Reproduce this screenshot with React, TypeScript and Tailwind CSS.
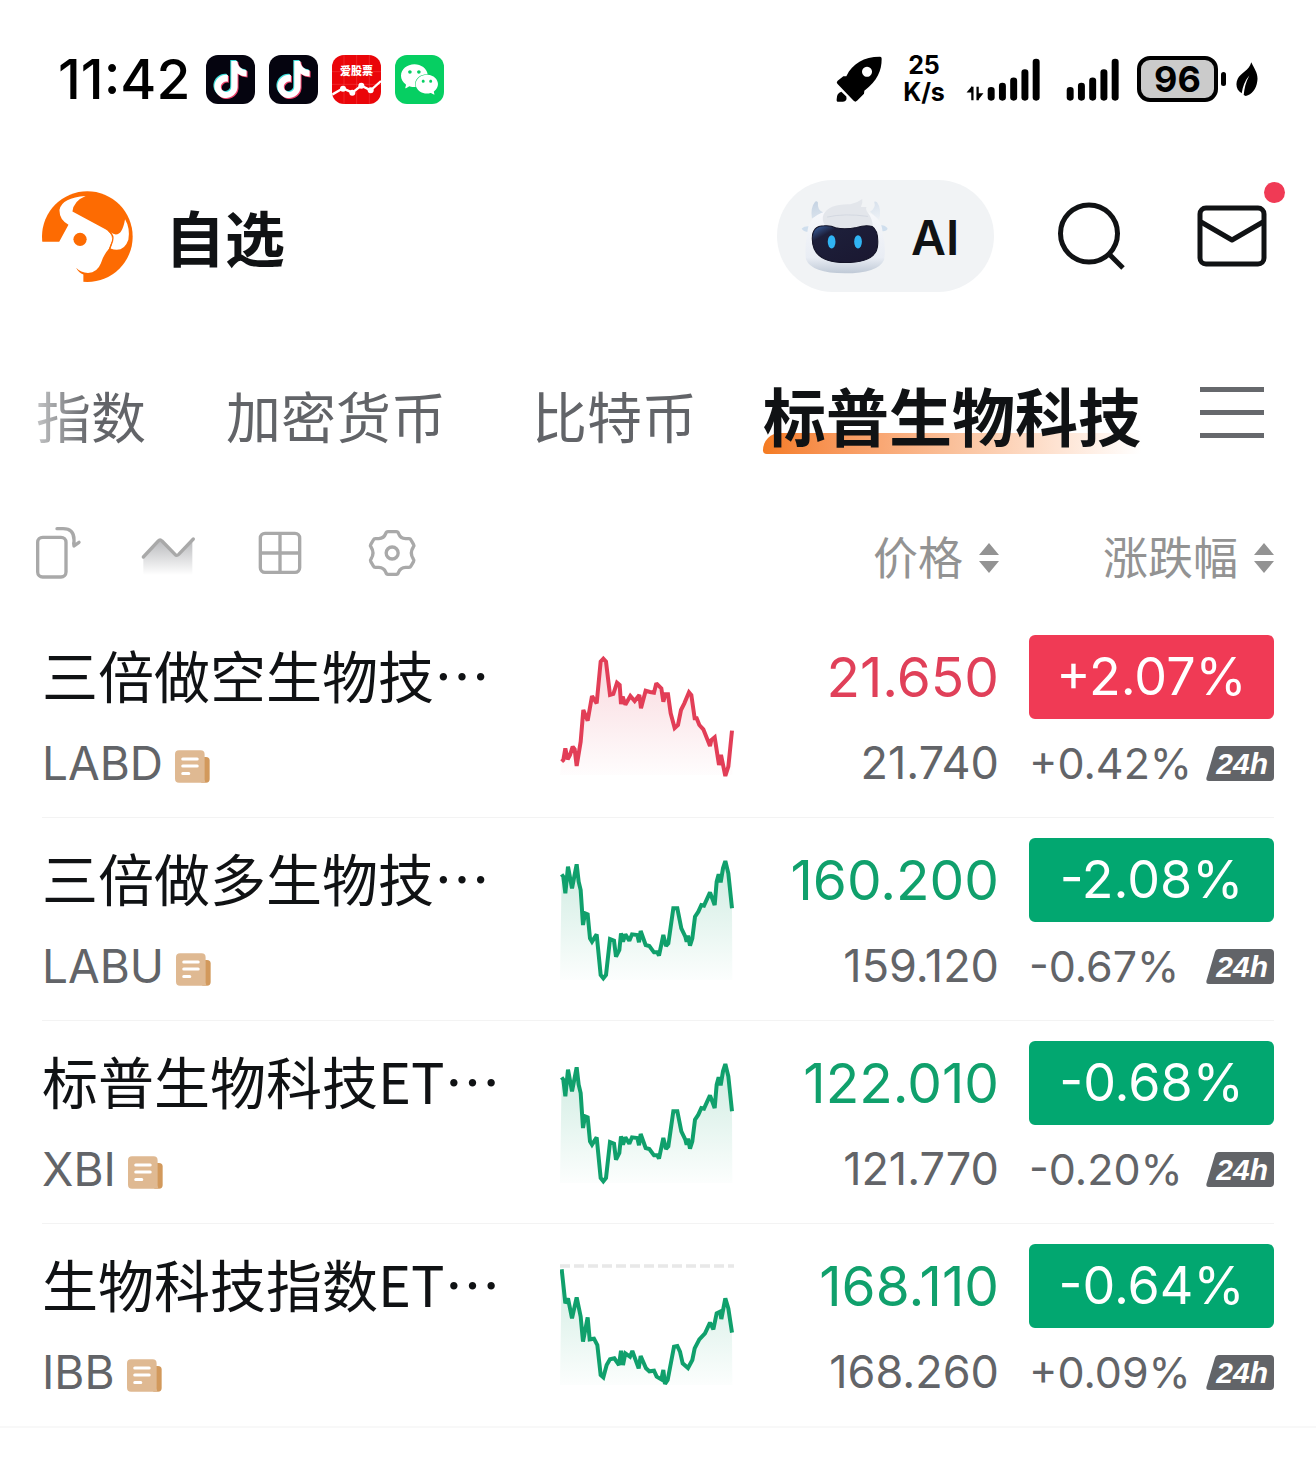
import React from "react";
import { SiTiktok, SiWechat } from "react-icons/si";

type Quote = {
  name: string;
  ticker: string;
  price: string;
  change: string;
  extPrice: string;
  extChange: string;
  up: boolean;
  points: string;
  top: number;
  baseline?: boolean;
};

const DIP =
  "35,88 40,95 46,145 54,65 66,130 80,58 86,110 92,135 99,240 105,205 113,208 120,280 126,290 140,268 152,390 160,400 168,390 180,282 192,287 198,335 208,315 213,265 219,290 226,268 238,287 246,268 262,270 267,292 272,258 287,300 298,303 312,322 322,322 327,332 340,270 348,303 355,295 370,190 382,190 394,250 406,275 410,290 414,272 420,302 427,280 435,215 445,200 454,180 462,182 480,142 494,180 500,110 506,88 512,112 519,70 526,48 535,85 546,190";

const quotes: Quote[] = [
  {
    name: "三倍做空生物技…",
    ticker: "LABD",
    price: "21.650",
    change: "+2.07%",
    extPrice: "21.740",
    extChange: "+0.42%",
    up: true,
    top: 15,
    points:
      "35,365 40,360 46,325 53,358 60,345 68,320 74,328 80,378 92,305 100,210 113,242 126,168 140,190 152,65 160,56 168,65 180,165 190,162 201,128 209,135 213,192 218,170 226,194 241,168 254,183 268,165 273,205 287,152 300,156 312,158 319,130 334,145 340,185 346,163 354,163 362,220 374,264 384,255 393,210 403,190 417,157 424,165 434,235 440,235 448,255 460,268 480,318 484,300 494,292 507,375 513,345 526,408 535,380 546,272",
  },
  {
    name: "三倍做多生物技…",
    ticker: "LABU",
    price: "160.200",
    change: "-2.08%",
    extPrice: "159.120",
    extChange: "-0.67%",
    up: false,
    top: 9,
    points: DIP,
  },
  {
    name: "标普生物科技ET…",
    ticker: "XBI",
    price: "122.010",
    change: "-0.68%",
    extPrice: "121.770",
    extChange: "-0.20%",
    up: false,
    top: 9,
    points: DIP,
  },
  {
    name: "生物科技指数ET…",
    ticker: "IBB",
    price: "168.110",
    change: "-0.64%",
    extPrice: "168.260",
    extChange: "+0.09%",
    up: false,
    top: 12,
    baseline: true,
    points:
      "35,58 46,160 54,145 66,205 80,142 92,200 99,275 113,202 119,268 132,266 142,285 152,375 160,382 170,345 180,328 193,325 207,345 213,302 219,345 226,310 240,320 247,303 266,355 272,318 288,355 298,364 312,362 320,380 334,388 340,360 345,402 353,390 372,290 382,288 390,305 398,340 414,354 427,330 434,295 448,268 465,250 480,218 490,238 500,190 510,185 514,207 526,145 535,175 546,248",
  },
];

function Sparkline({ q }: { q: Quote }) {
  const color = q.up ? "#e23e57" : "#10a06c";
  const id = "fill-" + q.ticker;
  return (
    <svg viewBox={`30 ${q.top} 522 420`} className="block h-[140px] w-[174px]" aria-hidden="true">
      <defs>
        <linearGradient id={id} x1="0" y1="50" x2="0" y2="410" gradientUnits="userSpaceOnUse">
          <stop offset="0" stopColor={color} stopOpacity="0.2" />
          <stop offset="1" stopColor={color} stopOpacity="0.01" />
        </linearGradient>
      </defs>
      {q.baseline && (
        <line x1="30" x2="555" y1="48" y2="48" stroke="#e8e8e8" strokeWidth="10" strokeDasharray="30 12" />
      )}
      <polygon points={`30,405 ${q.points} 547,405`} fill={`url(#${id})`} />
      <polyline points={q.points} fill="none" stroke={color} strokeWidth="12" strokeLinejoin="miter" strokeMiterlimit="2" />
    </svg>
  );
}

function TiktokBadge() {
  return (
    <span className="relative block size-[49px] rounded-[12px] bg-[#05040f]">
      <SiTiktok className="absolute top-[5px] left-[5px] size-[37px] text-[#3fe0dc]" />
      <SiTiktok className="absolute top-[7px] left-[7px] size-[37px] text-[#f0436c]" />
      <SiTiktok className="absolute top-1.5 left-1.5 size-[37px] text-white" />
    </span>
  );
}

function StockBadge() {
  return (
    <span className="relative block size-[49px] overflow-hidden rounded-[12px] bg-[#ea0509]">
      <svg viewBox="0 0 147 147" className="absolute inset-0 size-full" aria-hidden="true">
        <path d="M36 0V147M74 0V147M112 0V147M0 50H147M0 88H147" stroke="#f5494b" strokeWidth="1.5" />
        <polyline points="0,119 33,100 61,113 88,92 116,106 147,78" fill="none" stroke="#fff" strokeWidth="7" />
        <g fill="#fff">
          <circle cx="33" cy="101" r="9" />
          <circle cx="61" cy="113" r="9" />
          <circle cx="88" cy="92" r="9" />
          <circle cx="116" cy="106" r="9" />
        </g>
      </svg>
      <span className="absolute inset-x-0 top-[9px] text-center text-[11px] leading-[14px] font-black text-white">爱股票</span>
    </span>
  );
}

function Signal({ data }: { data?: boolean }) {
  const bars = [
    [751, 140],
    [785, 127],
    [819, 111],
    [853, 86],
    [887, 54],
  ];
  return (
    <span className="flex items-end gap-[3px]">
      {data && (
        <svg viewBox="440 136 52 46" className="h-[15px] w-[18px]" aria-hidden="true">
          <path d="M458 138v42M474 138v42" stroke="#000" strokeWidth="7" fill="none" />
          <path d="M440 156l17-20v20zM475 180l17-22h-17z" />
        </svg>
      )}
      <svg viewBox="740 52 160 130" className="h-[43px] w-[54px]" aria-hidden="true">
        {bars.map(([x, y]) => (
          <rect key={x} x={x - 10.5} y={y} width="21" height={181 - y} rx="10" />
        ))}
      </svg>
    </span>
  );
}

function StatusBar() {
  return (
    <div className="flex h-[158px] items-center justify-between pr-[58px] pl-[58px] text-black">
      <div className="flex items-center">
        <time className="w-[148px] text-[55px] leading-[60px] font-medium">11:42</time>
        <div className="flex items-center gap-3.5">
          <TiktokBadge />
          <TiktokBadge />
          <StockBadge />
          <span className="flex size-[49px] items-center justify-center rounded-[12px] bg-[#06cf62]">
            <SiWechat className="size-[37px] text-white" />
          </span>
        </div>
      </div>
      <div className="flex items-center">
        <svg viewBox="46 46 138 140" className="mr-5 h-[47px] w-[46px]" aria-hidden="true">
          <path
            fillRule="evenodd"
            d="M177 48Q183 47 183 54C183 90 170 120 131 150L130 159L109 180Q104 185 99 180L50 129Q46 124 51 120L68 106H77C96 68 130 48 177 48ZM139 78a15 15 0 1 0 .1 0Z"
          />
          <path d="M62 153l15 14q3 14-10 16h-14q-6 0-5-8 0-18 14-22z" />
        </svg>
        <div className="mr-5 w-[44px] text-center text-[25px] leading-[27px] font-bold">
          <div>25</div>
          <div>K/s</div>
        </div>
        <Signal data />
        <span className="w-[25px]" />
        <Signal />
        <div className="ml-[17px] flex h-[46px] w-[81px] items-center justify-center rounded-[13px] border-4 border-black bg-[#cbcbcb] text-[36px] leading-[38px] font-bold">
          96
        </div>
        <span className="ml-[3px] h-3.5 w-[5px] rounded-full bg-black" />
        <svg viewBox="1246 62 66 106" className="ml-2.5 h-[35px] w-[22px]" aria-hidden="true">
          <path d="M1292 63c10 22 22 34 18 58-3 22-16 40-35 44l-6-3c2-20 6-38 17-59-14 16-20 34-23 54-16-8-20-28-12-44 8-17 34-24 41-50z" />
        </svg>
      </div>
    </div>
  );
}

function BullLogo() {
  return (
    <svg viewBox="65 58 275 275" className="size-[91px]" role="img" aria-label="自选">
      <circle cx="202" cy="196" r="137" fill="#fd6b02" />
      <path
        d="M60 211H117L145 160Q116 144 118 114Q126 78 197 73Q160 88 157 120L258 174Q279 186 277 208L268 232Q250 252 243 276Q232 304 204 306Q182 305 168 290Q176 306 190 310V336H60z"
        fill="#fff"
      />
      <path d="M272 183Q305 206 316 143Q332 170 326 205Q312 246 272 232Q283 208 272 183z" fill="#fff" />
      <path d="M266 178Q284 192 278 210L268 236" fill="none" stroke="#fd6b02" strokeWidth="4" />
      <circle cx="180" cy="204" r="20" fill="#fd6b02" />
    </svg>
  );
}

function Robot() {
  return (
    <svg viewBox="116 98 250 224" preserveAspectRatio="none" className="h-[75px] w-[88px]" aria-hidden="true">
      <defs>
        <linearGradient id="shell" x1="0" y1="0" x2="0" y2="1">
          <stop offset="0" stopColor="#f7f8fb" />
          <stop offset="0.75" stopColor="#e9edf4" />
          <stop offset="1" stopColor="#bfc9d6" />
        </linearGradient>
        <linearGradient id="horn" x1="0" y1="0" x2="1" y2="1">
          <stop offset="0" stopColor="#c4d2e2" />
          <stop offset="1" stopColor="#eef2f7" />
        </linearGradient>
        <linearGradient id="visor" x1="0" y1="0" x2="1" y2="1">
          <stop offset="0" stopColor="#3d6bb0" />
          <stop offset="0.22" stopColor="#1d1f3a" />
          <stop offset="1" stopColor="#1a1730" />
        </linearGradient>
      </defs>
      <path d="M156 106Q142 124 147 156L180 138Q162 134 164 108Q160 102 156 106zM324 106Q330 124 312 136L338 160Q346 128 332 108Q328 104 324 106z" fill="url(#horn)" />
      <path d="M118 186Q126 178 142 180L138 196Q122 196 118 186zM362 186Q356 176 338 176L344 194Q360 196 362 186z" fill="#cfdeed" />
      <path d="M134 200Q136 142 200 132H284Q346 142 348 200Q358 240 352 280Q334 320 241 320Q146 320 130 278Q126 238 134 200z" fill="url(#shell)" />
      <path d="M180 144Q196 112 256 114Q276 110 290 98Q292 112 286 122L302 122Q298 130 308 142Q318 156 320 178Q284 190 240 188Q204 188 184 176Q174 160 180 144z" fill="#e3e6eb" />
      <path d="M190 152Q240 140 306 150" stroke="#cbd2dc" strokeWidth="2" fill="none" />
      <path d="M148 216Q148 178 182 178Q200 176 214 184Q241 190 274 183Q300 174 318 180Q336 192 334 232Q334 288 241 288Q148 288 148 216z" fill="url(#visor)" stroke="#131327" strokeWidth="3" />
      <ellipse cx="203" cy="226" rx="11" ry="20" fill="#30b4f3" />
      <ellipse cx="278" cy="226" rx="11" ry="20" fill="#30b4f3" />
    </svg>
  );
}

function Header() {
  return (
    <header className="flex h-[156px] items-center justify-between pr-[47px] pl-[42px]">
      <div className="flex items-center gap-8">
        <BullLogo />
        <h1 className="pt-2 text-[60px] leading-[72px] font-bold text-[#101214]">自选</h1>
      </div>
      <div className="flex items-center">
        <button type="button" className="flex h-28 w-[217px] items-center rounded-full bg-[#f1f3f5] pl-6 text-[#101214]">
          <Robot />
          <span className="ml-[22px] pt-1 text-[48px] leading-[56px] font-semibold">AI</span>
        </button>
        <button type="button" aria-label="搜索" className="ml-16">
          <svg viewBox="1058 202 68 68" className="block size-[68px]" fill="none" stroke="#101214" strokeWidth="5">
            <circle cx="1089" cy="233.500" r="28.500" />
            <path d="M1108 253l15 15" />
          </svg>
        </button>
        <button type="button" aria-label="消息" className="relative ml-[71px]">
          <svg viewBox="1197 202 72 68" className="block h-[68px] w-[72px]" fill="none" stroke="#101214" strokeWidth="5">
            <rect x="1200" y="208" width="64" height="56" rx="6" />
            <path d="M1201 222l31 18 31-18" strokeLinejoin="round" />
          </svg>
          <span className="absolute -top-5 -right-4 size-[21px] rounded-full bg-[#f03a55]" />
        </button>
      </div>
    </header>
  );
}

function Tabs() {
  return (
    <nav className="flex h-[204px] items-center justify-between pr-[52px] pl-9">
      <div className="flex items-center pt-1 text-[55px] leading-[80px] whitespace-nowrap text-[#626468]">
        <a href="#index" className="mr-20 bg-gradient-to-r from-[#c4c5c6] via-[#626468] to-[#626468] bg-clip-text text-transparent">
          指数
        </a>
        <a href="#crypto" className="mr-[86px]">加密货币</a>
        <a href="#bitcoin" className="mr-[66px]">比特币</a>
        <a href="#biotech" aria-current="page" className="relative text-[63px] font-bold text-[#101214]">
          <span className="absolute inset-x-0 bottom-1 h-[21px] rounded-tl-[18px] rounded-bl-[4px] bg-gradient-to-r from-[#f47b20] via-[#fac09a] to-white" />
          <span className="relative">标普生物科技</span>
        </a>
      </div>
      <button type="button" aria-label="分组" className="flex w-16 flex-col gap-[18px] pb-2">
        <span className="h-[5px] bg-[#66686c]" />
        <span className="h-[5px] bg-[#66686c]" />
        <span className="h-[5px] bg-[#66686c]" />
      </button>
    </nav>
  );
}

function Toolbar() {
  return (
    <div className="-ml-2 flex h-[70px] items-center">
      <button type="button" aria-label="横屏">
        <svg viewBox="42 42 144 168" className="block h-14 w-12" fill="none" stroke="#a9a9a9" strokeWidth="10" strokeLinecap="round" strokeLinejoin="round">
          <rect x="53" y="79" width="85" height="119" rx="15" />
          <path d="M111 53h18q33 0 33 33v19l15-11M162 105l-1-9" />
        </svg>
      </button>
      <button type="button" aria-label="走势图" className="ml-[58px]">
        <svg viewBox="360 42 168 168" className="block size-14" fill="none">
          <defs>
            <linearGradient id="area" x1="0" y1="80" x2="0" y2="192" gradientUnits="userSpaceOnUse">
              <stop offset="0" stopColor="#b4b5b8" />
              <stop offset="1" stopColor="#fff" />
            </linearGradient>
          </defs>
          <path d="M370 138L420 85L470 133L517 86V192H370z" fill="url(#area)" />
          <path d="M370 138L415 90Q420 83 426 90L465 130Q470 136 476 130L520 84" stroke="#a9a9a9" strokeWidth="10" strokeLinecap="round" />
        </svg>
      </button>
      <button type="button" aria-label="宫格" className="ml-14">
        <svg viewBox="696 42 168 168" className="block size-14" fill="none" stroke="#a9a9a9" strokeWidth="10">
          <rect x="721" y="67" width="118" height="117" rx="14" />
          <path d="M780 67V184M721 126H839" />
        </svg>
      </button>
      <button type="button" aria-label="设置" className="ml-14">
        <svg viewBox="1032 42 168 168" className="block size-14" fill="none" stroke="#a9a9a9" strokeWidth="10" strokeLinejoin="round">
          <path d="M1104 62H1129Q1134 62 1136 68Q1141 82 1157 83L1167 83Q1171 83 1173 87L1181 101Q1183 104 1180 108Q1168 126 1180 144Q1183 148 1181 151L1173 165Q1171 169 1167 169H1157Q1141 170 1136 183Q1134 190 1129 190H1104Q1099 190 1097 183Q1092 170 1076 169H1066Q1062 169 1060 165L1052 151Q1050 148 1053 144Q1065 126 1053 108Q1050 104 1052 101L1060 87Q1062 83 1066 83H1076Q1092 82 1097 68Q1099 62 1104 62z" />
          <circle cx="1116.500" cy="126" r="18" />
        </svg>
      </button>
    </div>
  );
}

function SortButton({ label }: { label: string }) {
  return (
    <button type="button" className="flex items-center justify-end gap-4 text-[45px] leading-[70px] font-normal text-[#939393]">
      <span className="pt-1.5">{label}</span>
      <svg viewBox="0 0 20 32" className="mt-1 h-8 w-5" fill="#939393" aria-hidden="true">
        <path d="M10 1L20 13H0zM10 31L0 19H20z" />
      </svg>
    </button>
  );
}

function NewsIcon() {
  return (
    <svg viewBox="467 362 104 97" className="mt-1.5 h-[33px] w-[35px]" aria-hidden="true">
      <path d="M545 382h14q11 0 11 11v55q0 11-11 11h-14z" fill="#d2995c" />
      <path d="M479 362h64q12 0 12 12v75q0 8 6 10h-82q-12 0-12-12v-73q0-12 12-12z" fill="#dfb992" />
      <path d="M490 388h43M490 409h43M490 431h18" stroke="#fff" strokeWidth="9" strokeLinecap="round" />
    </svg>
  );
}

function Badge24h() {
  return (
    <span className="relative flex h-[35px] w-[68px] items-center justify-end pr-1.5">
      <svg viewBox="0 0 68 35" className="absolute inset-0 size-full" aria-hidden="true">
        <path d="M13 0H64Q68 0 68 4V31Q68 35 64 35H3Q-1 35 1 30L9 3Q10 0 13 0z" fill="#626468" />
      </svg>
      <span className="relative font-['Liberation_Sans',sans-serif] text-[30px] leading-[35px] font-bold text-white italic">24h</span>
    </span>
  );
}

function QuoteRow({ q, last }: { q: Quote; last: boolean }) {
  return (
    <tr className={last ? "align-top" : "border-b border-[#f3f3f3] align-top"}>
      <td className="pt-5 pb-[26px] whitespace-nowrap">
        <div className="font-['Noto_Sans_CJK_SC',sans-serif] text-[56px] leading-[78px] text-[#101214]">{q.name}</div>
        <div className="mt-[22px] flex h-14 items-center gap-3 text-[46px] leading-[58px] text-[#626468]">
          {q.ticker}
          <NewsIcon />
        </div>
      </td>
      <td className="pt-[30px]">
        <Sparkline q={q} />
      </td>
      <td className="pt-5 text-right whitespace-nowrap">
        <div className={q.up ? "text-[55px] leading-[84px] text-[#e04059]" : "text-[55px] leading-[84px] text-[#10a06c]"}>{q.price}</div>
        <div className="mt-4 text-[45px] leading-[56px] text-[#626468]">{q.extPrice}</div>
      </td>
      <td className="pt-5 pl-[30px] whitespace-nowrap">
        <div
          className={
            q.up
              ? "rounded-[6px] bg-[#f03a55] text-center text-[52px] leading-[84px] text-white"
              : "rounded-[6px] bg-[#02a770] text-center text-[52px] leading-[84px] text-white"
          }
        >
          {q.change}
        </div>
        <div className="mt-4 flex items-center justify-between text-[43px] leading-[56px] text-[#626468]">
          {q.extChange}
          <Badge24h />
        </div>
      </td>
    </tr>
  );
}

export default function App() {
  return (
    <main lang="zh-CN" className="min-h-screen bg-white font-['Inter','Noto_Sans_CJK_SC',sans-serif]">
      <StatusBar />
      <Header />
      <Tabs />
      <div className="px-[42px]">
        <table className="w-full table-fixed border-collapse">
          <colgroup>
            <col />
            <col className="w-[174px]" />
            <col className="w-[265px]" />
            <col className="w-[275px]" />
          </colgroup>
          <thead>
            <tr className="h-[97px] align-top">
              <th scope="col" colSpan={2}>
                <Toolbar />
              </th>
              <th scope="col">
                <div className="flex justify-end">
                  <SortButton label="价格" />
                </div>
              </th>
              <th scope="col">
                <div className="flex justify-end">
                  <SortButton label="涨跌幅" />
                </div>
              </th>
            </tr>
          </thead>
          <tbody>
            {quotes.map((q, i) => (
              <QuoteRow key={q.ticker} q={q} last={i === quotes.length - 1} />
            ))}
          </tbody>
        </table>
      </div>
      <hr className="border-t-2 border-[#f8f8f8]" />
    </main>
  );
}
